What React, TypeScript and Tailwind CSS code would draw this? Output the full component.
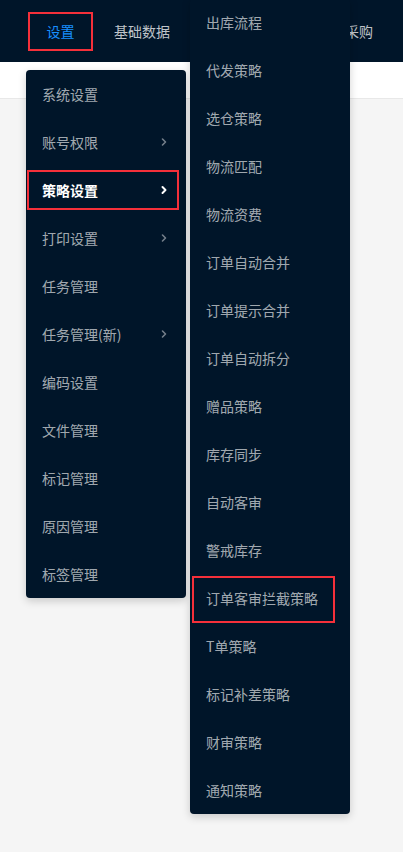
import { FunctionComponent } from "react";

const leftItems: { label: string; arrow?: boolean; active?: boolean }[] = [
  { label: "系统设置" },
  { label: "账号权限", arrow: true },
  { label: "策略设置", arrow: true, active: true },
  { label: "打印设置", arrow: true },
  { label: "任务管理" },
  { label: "任务管理(新)", arrow: true },
  { label: "编码设置" },
  { label: "文件管理" },
  { label: "标记管理" },
  { label: "原因管理" },
  { label: "标签管理" },
];

const subItems = [
  "出库流程",
  "代发策略",
  "选仓策略",
  "物流匹配",
  "物流资费",
  "订单自动合并",
  "订单提示合并",
  "订单自动拆分",
  "赠品策略",
  "库存同步",
  "自动客审",
  "警戒库存",
  "订单客审拦截策略",
  "T单策略",
  "标记补差策略",
  "财审策略",
  "通知策略",
];

const Chevron: FunctionComponent<{ active?: boolean }> = ({ active }) => (
  <svg width="8" height="10" viewBox="0 0 8 10" className="shrink-0">
    <path
      d="M2.5 2 L5.5 5 L2.5 8"
      fill="none"
      stroke={active ? "#ffffff" : "rgba(255,255,255,0.45)"}
      strokeWidth={active ? 2 : 1.6}
      strokeLinecap="round"
      strokeLinejoin="round"
    />
  </svg>
);

export default function App() {
  return (
    <div
      className="relative h-[852px] w-[403px] overflow-hidden bg-[#f5f5f5] text-[14px]"
      style={{ fontFamily: '"Noto Sans CJK SC", "Liberation Sans", sans-serif' }}
    >
      <header className="flex h-[62px] items-center bg-[#001529] pl-[28px]">
        <div className="flex h-[39px] w-[65px] items-center justify-center border-2 border-[#f5303a] text-[#1890ff]">
          设置
        </div>
        <span className="ml-[21px] text-[rgba(255,255,255,0.75)]">基础数据</span>
        <span className="ml-auto mr-[30px] text-[rgba(255,255,255,0.75)]">采购</span>
      </header>
      <div className="h-[37px] border-b border-[#e8e8e8] bg-white" />

      {/* level 1 dropdown */}
      <ul className="absolute left-[26px] top-[70px] w-[160px] rounded-[4px] bg-[#001529] py-[4px] shadow-[0_3px_8px_rgba(0,0,0,0.18)]">
        {leftItems.map((item, i) => (
          <li
            key={item.label}
            className={`relative flex h-[40px] items-center pl-[16px] pr-[18px] ${
              i < leftItems.length - 1 ? "mb-[8px]" : ""
            } ${item.active ? "font-semibold text-white" : "text-[rgba(255,255,255,0.65)]"}`}
          >
            <span className="flex-1">{item.label}</span>
            {item.arrow && <Chevron active={item.active} />}
            {item.active && (
              <div className="absolute left-[1px] top-0 h-[40px] w-[152px] border-2 border-[#f5303a]" />
            )}
          </li>
        ))}
      </ul>

      {/* level 2 dropdown */}
      <ul className="absolute left-[190px] top-[-2px] w-[160px] rounded-[4px] bg-[#001529] py-[4px] shadow-[0_3px_8px_rgba(0,0,0,0.18)]">
        {subItems.map((label, i) => (
          <li
            key={label}
            className={`relative flex h-[40px] items-center pl-[16px] text-[rgba(255,255,255,0.65)] ${
              i < subItems.length - 1 ? "mb-[8px]" : ""
            }`}
          >
            {label}
            {label === "订单客审拦截策略" && (
              <div className="absolute left-[2px] top-[-2px] h-[47px] w-[143px] border-2 border-[#f5303a]" />
            )}
          </li>
        ))}
      </ul>
    </div>
  );
}
